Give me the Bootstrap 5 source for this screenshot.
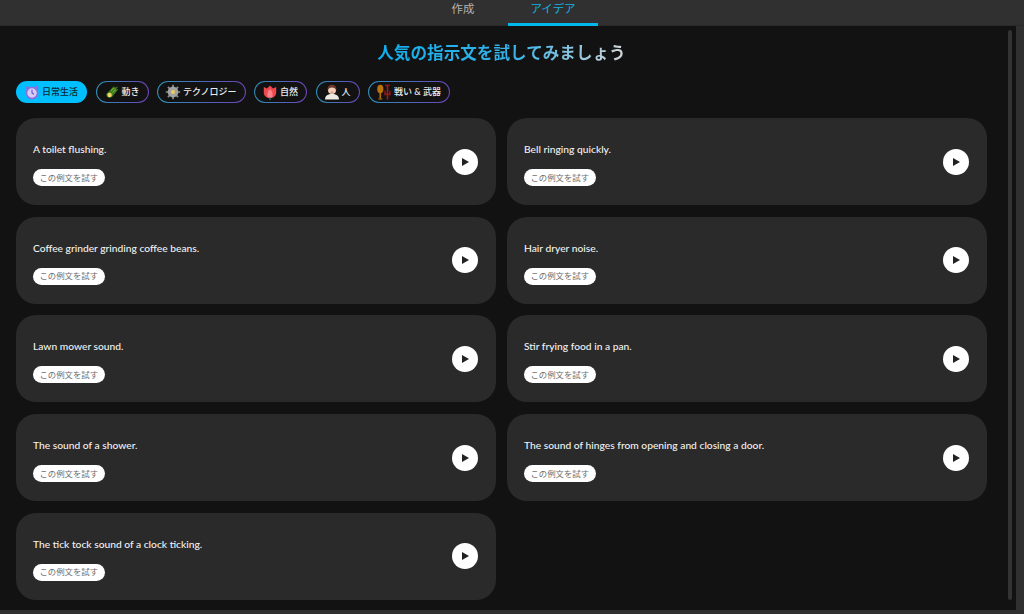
<!DOCTYPE html>
<html lang="ja"><head><meta charset="utf-8">
<link href="https://cdn.jsdelivr.net/npm/bootstrap@5.3.0/dist/css/bootstrap.min.css" rel="stylesheet">
<style>
html,body{height:100%;overflow:hidden}
body{background:#303030;font-family:"Lato","Noto Sans CJK JP",sans-serif;color:#eee;height:614px}
.topbar{height:26px;background:#303030;border-bottom:1px solid #2a2a2a;padding-right:8px}
.tabbtn{width:90px;height:26px;color:#b4b4b4;font-size:11.4px;line-height:17px;text-align:center;display:block;text-decoration:none}
.tabbtn.on{color:#14b0e2;border-bottom:3px solid #00b8ec}
.panel{width:1016px;height:584px;background:#121212;padding:15px 4px 0 16px;overflow:hidden}
.maincol{width:971px}
.heading{font-size:16.6px;font-weight:700;line-height:24px;margin:0 0 16px;text-align:center}
.heading span{background:linear-gradient(90deg,#10aeee 0%,#38b2e8 55%,#d6d6d6 100%);-webkit-background-clip:text;background-clip:text;color:transparent}
.pillrow{gap:8.5px;margin-bottom:15px}
.pilly{height:22px;border-radius:11px;font-size:9px;font-weight:500;color:#ececec;display:flex;align-items:center;padding:0 8px 0 7px;gap:2px;border:1px solid transparent;background:linear-gradient(#121212,#121212) padding-box,linear-gradient(90deg,#2f8fb5,#6a44b8) border-box;white-space:nowrap}
.pilly.on{background:#00bfff;color:#0a2636;border:0;padding:0 9px 0 8px}
.pilly svg{width:16px;height:16px;flex:none}
.gridwrap{display:grid;grid-template-columns:480px 480px;column-gap:11px;row-gap:11.7px;grid-auto-rows:87px}
.idea{background:#2a2a2a;border-radius:20px;padding:0 18px 0 17px;display:flex;align-items:center;justify-content:space-between}
.ideabody{padding-top:5px}
.ideatxt{font-size:10.25px;font-weight:500;color:#f2f2f2;line-height:14px;margin:0 0 13px}
.trybtn{display:block;width:fit-content;margin-left:-.5px;background:#fff;color:#6e6e6e;font-size:8.4px;height:17px;line-height:16px;border-radius:9px;padding:0 7px;border:0}
.playbtn{width:26px;height:26px;border-radius:50%;background:#fff;border:0;padding:0;display:flex;align-items:center;justify-content:center}
.track{width:4px;height:570px;background:#333;border-radius:2px;margin:-11px 0 0 21px;flex:none}
</style></head><body>
<div class="topbar d-flex justify-content-center">
<a class="tabbtn" href="#">作成</a><a class="tabbtn on" href="#">アイデア</a>
</div>
<div class="panel d-flex">
<div class="maincol">
<h1 class="heading"><span>人気の指示文を試してみましょう</span></h1>
<div class="d-flex pillrow">
<div class="pilly on"><svg viewBox="0 0 16 16"><circle cx="8" cy="9" r="5.600" fill="#d6ccf6" stroke="#8a70e0" stroke-width="1.700"/><path d="M8 5.800V9l2 1.300" stroke="#6a50c8" stroke-width="1.100" fill="none"/><path d="M1.800 4.800 4.300 2.200M14.200 4.800 11.700 2.200" stroke="#8a70e0" stroke-width="2"/></svg>日常生活</div>
<div class="pilly"><svg viewBox="0 0 16 16"><path d="M2.800 9.500 10.500 1.500l-.8 2.600L14 2.500l-2 3 2.500-.5-6 7.500c-2 1.800-4.200 1.500-5.300.2-1-1.200-1-2.800-.4-3.700z" fill="#3f7d1c"/><path d="M7 6.500l3.500-2.800M8.500 8.500l3.500-3" stroke="#86b43a" stroke-width=".9"/><circle cx="5.600" cy="11" r="2.200" fill="#f0d868"/></svg>動き</div>
<div class="pilly"><svg viewBox="0 0 16 16"><path d="M8 .8v14.400M.8 8h14.400M2.900 2.900l10.200 10.200M13.100 2.900 2.900 13.100" stroke="#8c8c8c" stroke-width="1.700"/><circle cx="8" cy="8" r="5.400" fill="#a2a2a2"/><circle cx="8" cy="8" r="2" fill="#f0cc60"/></svg>テクノロジー</div>
<div class="pilly"><svg viewBox="0 0 16 16"><path d="M1.800 3 5 4.600 8 1.500l3 3.100L14.200 3v5.500C14.200 11.800 11.500 14 8 14s-6.200-2.200-6.200-5.500z" fill="#f0484f"/><path d="M8 5.500c-2.200 1-3.200 4-2.200 8h4.400c1-4 0-7-2.200-8z" fill="#ff8288"/><path d="M8 13.500V16" stroke="#2e7a7a" stroke-width="1.300"/></svg>自然</div>
<div class="pilly"><svg viewBox="0 0 16 16"><path d="M1 15.500c0-3.800 3-5.500 7-5.500s7 1.700 7 5.500z" fill="#ece8e2"/><circle cx="8" cy="6" r="4" fill="#f2cdb8"/><path d="M3.700 6.500C3 2.500 5.300.7 8 .7s5 1.800 4.300 5.800c-.8-1.700-2.200-3-4.300-3s-3.500 1.300-4.300 3z" fill="#6b3a2a"/><path d="M6.800 8.200h2.400" stroke="#c05050" stroke-width=".7"/></svg>人</div>
<div class="pilly"><svg viewBox="0 0 16 16"><ellipse cx="4.300" cy="5" rx="3.100" ry="4.300" fill="#b8720e"/><path d="M4.300 9v5.500" stroke="#b8720e" stroke-width="1.600"/><path d="M2.300 15h4" stroke="#b8720e" stroke-width="1"/><path d="M11.500 1v14.500" stroke="#a81818" stroke-width="1.600"/><path d="M9.200 1.300h4.600" stroke="#a81818" stroke-width="1.200"/><path d="M9 6.500v2.300c0 1.300 1 1.700 2.500 1.700s2.500-.4 2.500-1.700V6.500M9 6.500v5M14 6.500v5" stroke="#a81818" stroke-width="1.100" fill="none"/></svg>戦い &amp; 武器</div>
</div>
<div class="gridwrap">
<div class="idea"><div class="ideabody"><p class="ideatxt">A toilet flushing.</p><button class="trybtn">この例文を試す</button></div><button class="playbtn" aria-label="play"><svg width="10" height="10" viewBox="0 0 10 10"><path d="M2 1l7 4-7 4z" fill="#222"/></svg></button></div>
<div class="idea"><div class="ideabody"><p class="ideatxt">Bell ringing quickly.</p><button class="trybtn">この例文を試す</button></div><button class="playbtn" aria-label="play"><svg width="10" height="10" viewBox="0 0 10 10"><path d="M2 1l7 4-7 4z" fill="#222"/></svg></button></div>
<div class="idea"><div class="ideabody"><p class="ideatxt">Coffee grinder grinding coffee beans.</p><button class="trybtn">この例文を試す</button></div><button class="playbtn" aria-label="play"><svg width="10" height="10" viewBox="0 0 10 10"><path d="M2 1l7 4-7 4z" fill="#222"/></svg></button></div>
<div class="idea"><div class="ideabody"><p class="ideatxt">Hair dryer noise.</p><button class="trybtn">この例文を試す</button></div><button class="playbtn" aria-label="play"><svg width="10" height="10" viewBox="0 0 10 10"><path d="M2 1l7 4-7 4z" fill="#222"/></svg></button></div>
<div class="idea"><div class="ideabody"><p class="ideatxt">Lawn mower sound.</p><button class="trybtn">この例文を試す</button></div><button class="playbtn" aria-label="play"><svg width="10" height="10" viewBox="0 0 10 10"><path d="M2 1l7 4-7 4z" fill="#222"/></svg></button></div>
<div class="idea"><div class="ideabody"><p class="ideatxt">Stir frying food in a pan.</p><button class="trybtn">この例文を試す</button></div><button class="playbtn" aria-label="play"><svg width="10" height="10" viewBox="0 0 10 10"><path d="M2 1l7 4-7 4z" fill="#222"/></svg></button></div>
<div class="idea"><div class="ideabody"><p class="ideatxt">The sound of a shower.</p><button class="trybtn">この例文を試す</button></div><button class="playbtn" aria-label="play"><svg width="10" height="10" viewBox="0 0 10 10"><path d="M2 1l7 4-7 4z" fill="#222"/></svg></button></div>
<div class="idea"><div class="ideabody"><p class="ideatxt">The sound of hinges from opening and closing a door.</p><button class="trybtn">この例文を試す</button></div><button class="playbtn" aria-label="play"><svg width="10" height="10" viewBox="0 0 10 10"><path d="M2 1l7 4-7 4z" fill="#222"/></svg></button></div>
<div class="idea"><div class="ideabody"><p class="ideatxt">The tick tock sound of a clock ticking.</p><button class="trybtn">この例文を試す</button></div><button class="playbtn" aria-label="play"><svg width="10" height="10" viewBox="0 0 10 10"><path d="M2 1l7 4-7 4z" fill="#222"/></svg></button></div>
</div>
</div>
<div class="track"></div>
</div>
</body></html>
